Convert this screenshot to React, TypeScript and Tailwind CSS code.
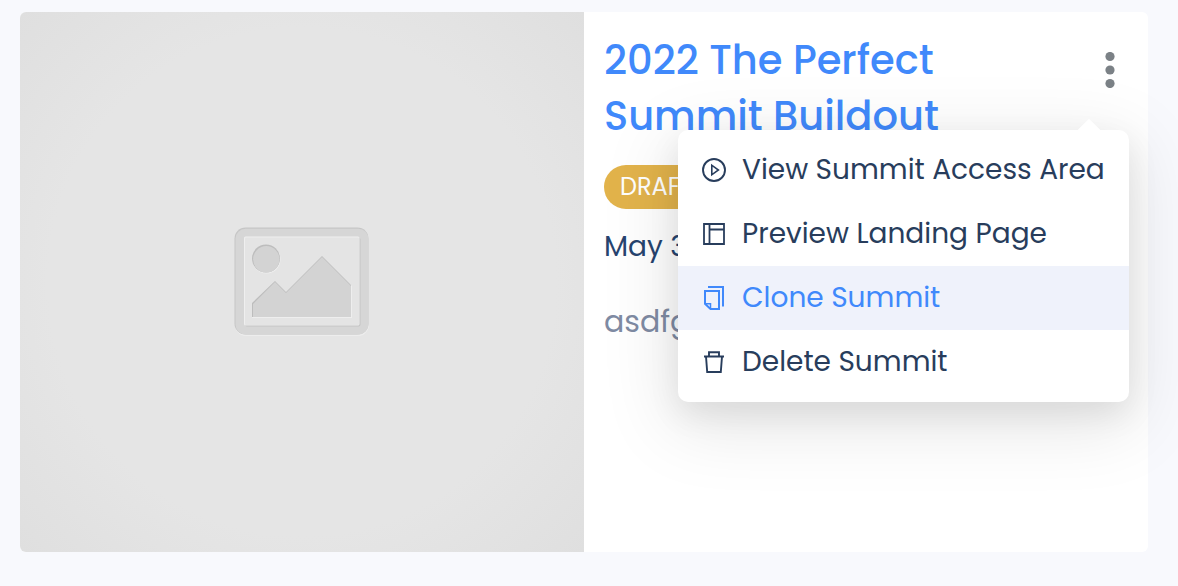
import type { ReactNode } from "react";

function PlayCircleIcon() {
  return (
    <svg className="size-6 shrink-0" viewBox="0 0 24 24" fill="none" stroke="currentColor" strokeWidth="1.9" aria-hidden="true">
      <circle cx="12" cy="12" r="11" />
      <path d="M9.8 7.2v9.6l6.6-4.8z" strokeWidth="1.6" />
    </svg>
  );
}

function LayoutIcon() {
  return (
    <svg className="size-6 shrink-0" viewBox="0 0 24 24" fill="none" stroke="currentColor" strokeWidth="1.8" aria-hidden="true">
      <path d="M2 2h20v20H2zM7.5 2v20M7.5 7.5H22" />
    </svg>
  );
}

function CloneIcon() {
  return (
    <svg className="size-6 shrink-0" viewBox="0 0 24 24" fill="none" stroke="currentColor" strokeWidth="2" aria-hidden="true">
      <path d="M3 5h14v18H8.5L3 17.8z" />
      <path d="M3 17.8h5.5V23" strokeWidth="1.5" />
      <path d="M6 1h15v19.5" />
    </svg>
  );
}

function TrashIcon() {
  return (
    <svg className="size-6 shrink-0" viewBox="0 0 24 24" fill="none" stroke="currentColor" strokeWidth="1.9" aria-hidden="true">
      <path d="M2 6.5h20M7 6.5V2.2h10v4.3M4 6.5L5.2 22h13.6L20 6.5" />
    </svg>
  );
}

function PlaceholderPicture() {
  return (
    <svg className="h-[110px] w-[136px]" viewBox="0 0 136 110" role="img" aria-label="No image">
      <rect x="1" y="2" width="134" height="107" rx="11" fill="#ededed" />
      <rect x="0.5" y="0.5" width="134" height="107" rx="11" fill="#c6c6c6" />
      <rect x="1.5" y="1.8" width="133" height="105.7" rx="10" fill="#d6d6d6" />
      <rect x="11" y="10.5" width="115.5" height="89" rx="2" fill="#c3c3c3" />
      <rect x="10" y="9.5" width="115.5" height="89" rx="1.5" fill="#efefef" />
      <rect x="11" y="10.5" width="114" height="87.5" rx="1" fill="#e4e4e4" />
      <circle cx="32.5" cy="32.5" r="14" fill="#efefef" />
      <circle cx="32" cy="31.5" r="14" fill="#bdbdbd" />
      <circle cx="32.3" cy="32.3" r="13.2" fill="#d3d3d3" />
      <path d="M18 78l23-22 11 10 36-35 30 28v32H18z" fill="#eeeeee" />
      <path d="M18 76l23-22 11 11 36-36 29 29v32H18z" fill="#bdbdbd" />
      <path d="M19 77l22-22 11 11 36-36 29 29v31H19z" fill="#d3d3d3" />
    </svg>
  );
}

type MenuItemProps = { icon: ReactNode; label: string; active?: boolean };

function MenuItem({ icon, label, active }: MenuItemProps) {
  return (
    <li role="none">
      <button
        type="button"
        role="menuitem"
        className={
          active
            ? "flex h-16 w-full items-center gap-4 bg-[#eff2fb] px-6 text-left text-[#4089fb]"
            : "flex h-16 w-full items-center gap-4 px-6 text-left text-[#283d5c]"
        }
      >
        {icon}
        <span className="whitespace-nowrap">{label}</span>
      </button>
    </li>
  );
}

function SummitMenu() {
  return (
    <div className="absolute top-[118px] right-[19px] w-[451px] rounded-[10px] bg-white py-2 text-[28px] leading-10 shadow-[0_12px_32px_rgba(0,0,0,0.08),0_18px_72px_8px_rgba(0,0,0,0.1)]">
      <span className="absolute -top-2 right-8 size-4 rotate-45 bg-white" />
      <ul role="menu" aria-label="Summit actions" className="relative">
        <MenuItem icon={<PlayCircleIcon />} label="View Summit Access Area" />
        <MenuItem icon={<LayoutIcon />} label="Preview Landing Page" />
        <MenuItem icon={<CloneIcon />} label="Clone Summit" active />
        <MenuItem icon={<TrashIcon />} label="Delete Summit" />
      </ul>
    </div>
  );
}

export default function App() {
  return (
    <main className="min-h-screen bg-[#f8f9fd] py-3 pr-[30px] pl-5 font-[Poppins,Inter,sans-serif]">
      <article className="relative grid min-h-[540px] grid-cols-2 rounded-md bg-white">
        <div className="flex items-center justify-center rounded-l-md bg-[radial-gradient(circle,#e5e5e5_65%,#dfdfdf_100%)]">
          <PlaceholderPicture />
        </div>
        <div className="p-5">
          <div className="flex items-start justify-between">
            <h2 className="max-w-[400px] text-[40px] leading-14 font-medium text-[#4089fb]">
              2022 The Perfect Summit Buildout
            </h2>
            <button type="button" aria-label="More options" className="flex h-[76px] w-9 items-center justify-center text-[#7b8186]">
              <svg className="h-9 w-[10px]" viewBox="0 0 10 36" fill="currentColor" aria-hidden="true">
                <circle cx="5" cy="4.5" r="4.6" />
                <circle cx="5" cy="18" r="4.6" />
                <circle cx="5" cy="31.5" r="4.6" />
              </svg>
            </button>
          </div>
          <span className="mt-[21px] flex h-11 w-28 items-center rounded-full bg-[#e2b34b] px-4 text-2xl text-white">DRAFT</span>
          <p className="mt-[18px] text-[28px] leading-10 text-[#27446f]">May 3</p>
          <p className="mt-[35px] text-[30px] leading-10 text-[#7f8ba3]">asdfg</p>
        </div>
        <SummitMenu />
      </article>
    </main>
  );
}
